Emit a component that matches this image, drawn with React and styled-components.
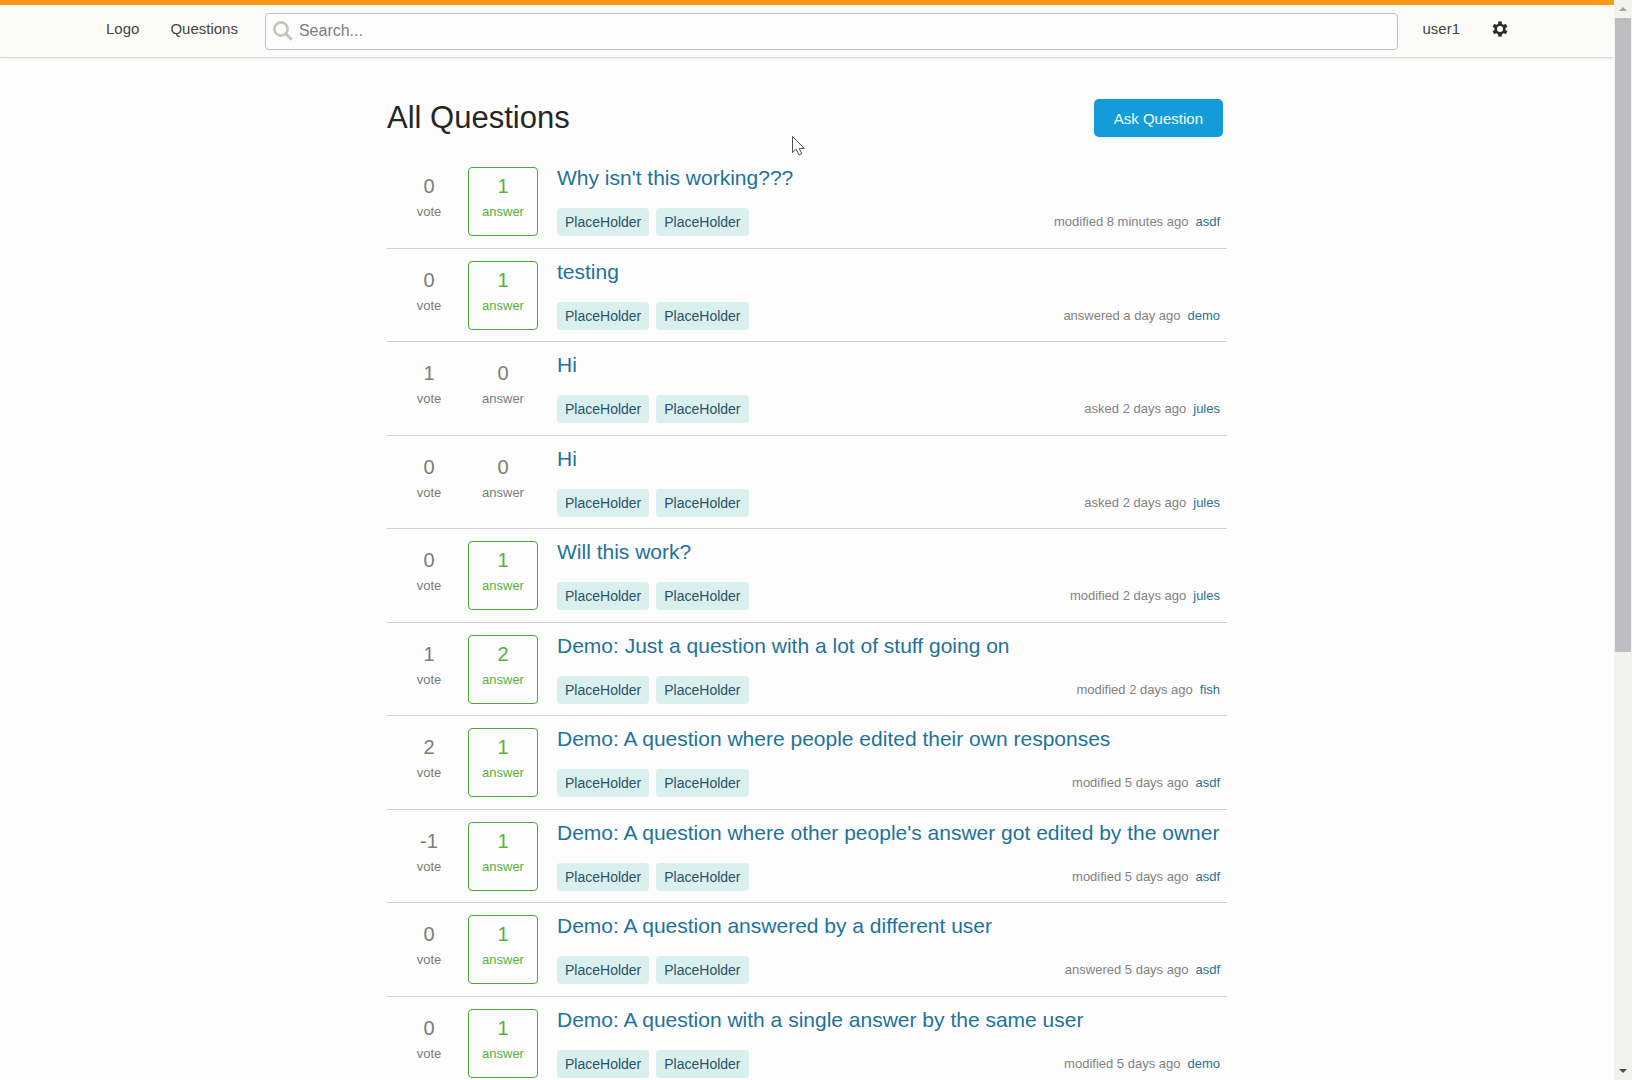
import React from "react";
import styled, { createGlobalStyle } from "styled-components";

const GlobalStyle = createGlobalStyle`
  * { box-sizing: border-box; }
  body {
    margin: 0;
    background: #fdfdfd;
    color: #2e2e2c;
    font-family: "Liberation Sans", Arial, sans-serif;
    font-size: 15px;
  }
  a { text-decoration: none; }
`;

const Shell = styled.div`
  display: grid;
  grid-template-columns: minmax(0, 1fr) 18px;
  height: 100vh;
  overflow: hidden;
`;

const Page = styled.div`
  min-width: 0;
  overflow: hidden;
`;

const TopBar = styled.header`
  border-top: 5px solid #fb9a1a;
  border-bottom: 1px solid #dcdce0;
  background: #fbfbfa;
  box-shadow: 0 1px 2px #ececf0;
`;

const Nav = styled.nav`
  display: flex;
  align-items: center;
  max-width: 1402px;
  height: 52px;
  margin: 0 auto;
  padding-bottom: 4px;
`;

const NavLink = styled.a`
  margin-right: ${(p) => p.$gap || 0}px;
  color: #454541;
  line-height: 20px;
`;

const SearchBox = styled.label`
  display: flex;
  flex: 1;
  align-items: center;
  gap: 6px;
  height: 37px;
  margin: 4px 24px 0 0;
  padding: 0 7px;
  border: 1px solid #bfc1c3;
  border-radius: 4px;
  background: #fdfdfd;
`;

const SearchInput = styled.input`
  flex: 1;
  min-width: 0;
  padding: 0;
  border: 0;
  outline: 0;
  background: transparent;
  font: inherit;
  font-size: 16px;
  color: #3b3b38;
  &::placeholder { color: #7d7d78; opacity: 1; }
`;

const IconButton = styled.button`
  display: flex;
  padding: 0;
  border: 0;
  background: none;
  color: #2e2e2a;
`;

const Main = styled.main`
  max-width: 840px;
  margin: 0 auto;
  padding-top: 41px;
`;

const Heading = styled.div`
  display: flex;
  align-items: center;
  justify-content: space-between;
  margin-bottom: 18px;
  padding-right: 4px;
`;

const Title = styled.h1`
  margin: 0;
  color: #262624;
  font-size: 31px;
  font-weight: 400;
  line-height: 38px;
`;

const AskButton = styled.button`
  height: 38px;
  padding: 0 20px;
  border: 0;
  border-radius: 5px;
  background: #149cd9;
  color: #f4fbfd;
  font: inherit;
`;

const List = styled.ul`
  margin: 0;
  padding: 0;
  list-style: none;
`;

const Row = styled.li`
  display: flex;
  padding: 12px 7px;
  border-bottom: 1px solid #cfcfdb;
  &:nth-child(even) { padding-bottom: 11px; }
`;

const Stat = styled.div`
  display: flex;
  flex-direction: column;
  align-items: center;
  width: 70px;
  height: 69px;
  margin-right: ${(p) => p.$gap}px;
  padding-top: 8px;
  border: 1px solid ${(p) => (p.$answered ? "#4cab33" : "transparent")};
  border-radius: 4px;
  color: ${(p) => (p.$answered ? "#56b33b" : "#7c7c78")};
`;

const Count = styled.span`
  font-size: 20px;
  line-height: 20px;
`;

const Caption = styled.span`
  margin-top: 9px;
  font-size: 13px;
  line-height: 14px;
`;

const Summary = styled.div`
  display: flex;
  flex: 1;
  flex-direction: column;
  justify-content: space-between;
  min-width: 0;
`;

const QuestionLink = styled.a`
  color: #1e739b;
  font-size: 21px;
  line-height: 22px;
  white-space: nowrap;
`;

const Footer = styled.div`
  display: flex;
  align-items: center;
  justify-content: space-between;
`;

const Tags = styled.div`
  display: flex;
  gap: 7px;
`;

const Tag = styled.a`
  padding: 0 8px;
  border-radius: 4px;
  background: #d9f0ef;
  color: #2b5266;
  font-size: 14px;
  line-height: 28px;
`;

const Activity = styled.div`
  display: flex;
  gap: 7px;
  color: #82827f;
  font-size: 13px;
  line-height: 28px;
`;

const UserLink = styled.a`
  color: #2a7193;
`;

const ScrollTrack = styled.div`
  display: flex;
  flex-direction: column;
  background: #f2f2f0;
`;

const ScrollEnd = styled.div`
  display: flex;
  align-items: center;
  justify-content: center;
  height: 18px;
  color: ${(p) => p.$color};
`;

const ScrollThumb = styled.div`
  flex: 17;
  margin: 0 1px;
  background: #bebec1;
`;

const ScrollRest = styled.div`
  flex: 11;
`;

const Pointer = styled.svg`
  position: absolute;
  top: 135px;
  left: 791px;
`;

const questions = [
  [0, 1, "Why isn't this working???", "modified 8 minutes ago", "asdf"],
  [0, 1, "testing", "answered a day ago", "demo"],
  [1, 0, "Hi", "asked 2 days ago", "jules"],
  [0, 0, "Hi", "asked 2 days ago", "jules"],
  [0, 1, "Will this work?", "modified 2 days ago", "jules"],
  [1, 2, "Demo: Just a question with a lot of stuff going on", "modified 2 days ago", "fish"],
  [2, 1, "Demo: A question where people edited their own responses", "modified 5 days ago", "asdf"],
  [-1, 1, "Demo: A question where other people's answer got edited by the owner", "modified 5 days ago", "asdf"],
  [0, 1, "Demo: A question answered by a different user", "answered 5 days ago", "asdf"],
  [0, 1, "Demo: A question with a single answer by the same user", "modified 5 days ago", "demo"],
];

function Question({ data }) {
  const [votes, answers, title, activity, user] = data;
  return (
    <Row>
      <Stat $gap={4}>
        <Count>{votes}</Count>
        <Caption>vote</Caption>
      </Stat>
      <Stat $gap={19} $answered={answers > 0}>
        <Count>{answers}</Count>
        <Caption>answer</Caption>
      </Stat>
      <Summary>
        <QuestionLink href="#">{title}</QuestionLink>
        <Footer>
          <Tags>
            <Tag href="#">PlaceHolder</Tag>
            <Tag href="#">PlaceHolder</Tag>
          </Tags>
          <Activity>
            <span>{activity}</span>
            <UserLink href="#">{user}</UserLink>
          </Activity>
        </Footer>
      </Summary>
    </Row>
  );
}

function GearIcon() {
  return (
    <svg width="16" height="16" viewBox="-8 -8 16 16" fill="none" stroke="currentColor" aria-hidden="true">
      <circle r="4.3" strokeWidth="2.6" />
      {[0, 60, 120, 180, 240, 300].map((angle) => (
        <path key={angle} d="M0-4.600V-7.600" strokeWidth="3.6" transform={`rotate(${angle})`} />
      ))}
    </svg>
  );
}

export default function App() {
  return (
    <>
      <GlobalStyle />
      <Shell>
        <Page>
          <TopBar>
            <Nav>
              <NavLink href="#" $gap={31}>Logo</NavLink>
              <NavLink href="#" $gap={27}>Questions</NavLink>
              <SearchBox>
                <svg width="20" height="20" viewBox="0 0 20 20" fill="none" stroke="#c3c5bc" aria-hidden="true">
                  <circle cx="8" cy="8" r="6.6" strokeWidth="2.6" />
                  <path d="M12.8 12.8 18.8 18.8" strokeWidth="3" />
                </svg>
                <SearchInput type="text" placeholder="Search..." aria-label="Search" />
              </SearchBox>
              <NavLink href="#" $gap={32}>user1</NavLink>
              <IconButton type="button" aria-label="Settings">
                <GearIcon />
              </IconButton>
            </Nav>
          </TopBar>
          <Main>
            <Heading>
              <Title>All Questions</Title>
              <AskButton type="button">Ask Question</AskButton>
            </Heading>
            <List>
              {questions.map((q, i) => (
                <Question key={i} data={q} />
              ))}
            </List>
          </Main>
        </Page>
        <ScrollTrack aria-hidden="true">
          <ScrollEnd $color="#a3a39c">
            <svg width="8" height="4" viewBox="0 0 8 4" fill="currentColor"><path d="M0 4 4 0 8 4z" /></svg>
          </ScrollEnd>
          <ScrollThumb />
          <ScrollRest />
          <ScrollEnd $color="#4c4c46">
            <svg width="8" height="4" viewBox="0 0 8 4" fill="currentColor"><path d="M0 0H8L4 4z" /></svg>
          </ScrollEnd>
        </ScrollTrack>
      </Shell>
      <Pointer width="15" height="22" viewBox="0 0 15 22" aria-hidden="true">
        <path d="M1.500 1.500V17.500L5.300 14.200 8 20 10.800 18.700 8.200 13.500H13.300z" fill="#fdfdfd" stroke="#4d4d5c" />
      </Pointer>
    </>
  );
}
